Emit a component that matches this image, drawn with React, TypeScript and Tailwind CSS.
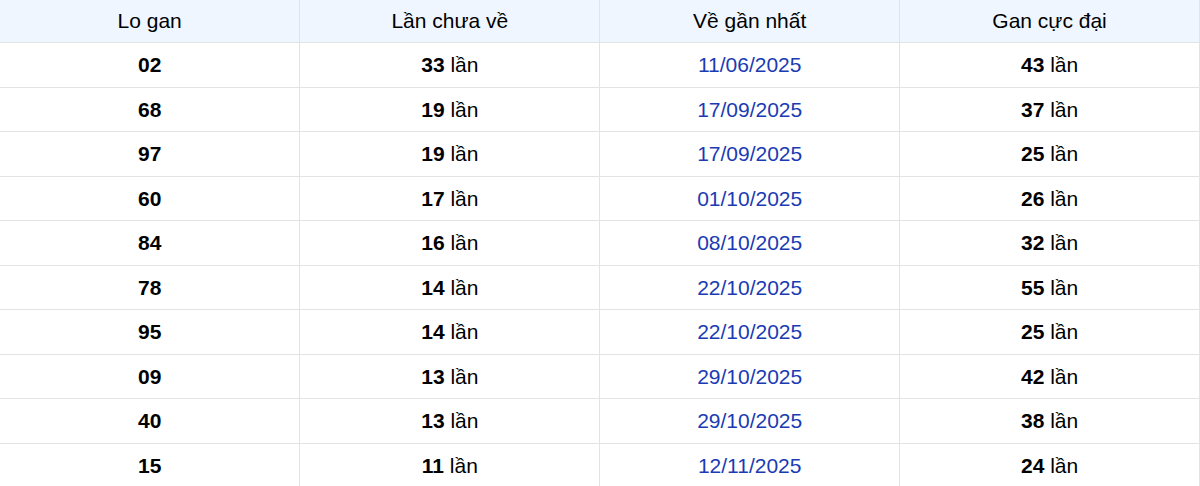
import React from "react";

const rows: [string, string, string, string][] = [
  ["02", "33", "11/06/2025", "43"],
  ["68", "19", "17/09/2025", "37"],
  ["97", "19", "17/09/2025", "25"],
  ["60", "17", "01/10/2025", "26"],
  ["84", "16", "08/10/2025", "32"],
  ["78", "14", "22/10/2025", "55"],
  ["95", "14", "22/10/2025", "25"],
  ["09", "13", "29/10/2025", "42"],
  ["40", "13", "29/10/2025", "38"],
  ["15", "11", "12/11/2025", "24"],
];

export default function App() {
  return (
    <div className="w-[1200px] bg-white" style={{ fontFamily: '"Liberation Sans", Arial, sans-serif' }}>
      <table className="w-full border-collapse table-fixed text-[21px] text-black">
        <thead>
          <tr className="bg-[#eff6ff] h-[42.5px]">
            {["Lo gan", "Lần chưa về", "Về gần nhất", "Gan cực đại"].map((h) => (
              <th key={h} className="font-normal text-center p-0 border-b border-r border-[#e3e3e3]">
                {h}
              </th>
            ))}
          </tr>
        </thead>
        <tbody>
          {rows.map((r, idx) => (
            <tr key={idx} className="h-[44.5px]">
              <td className="text-center p-0 border-b border-r border-[#e3e3e3] font-bold">{r[0]}</td>
              <td className="text-center p-0 border-b border-r border-[#e3e3e3]">
                <span className="font-bold">{r[1]}</span> lần
              </td>
              <td className="text-center p-0 border-b border-r border-[#e3e3e3] text-[#1a3bb3]">{r[2]}</td>
              <td className="text-center p-0 border-b border-r border-[#e3e3e3]">
                <span className="font-bold">{r[3]}</span> lần
              </td>
            </tr>
          ))}
        </tbody>
      </table>
    </div>
  );
}
